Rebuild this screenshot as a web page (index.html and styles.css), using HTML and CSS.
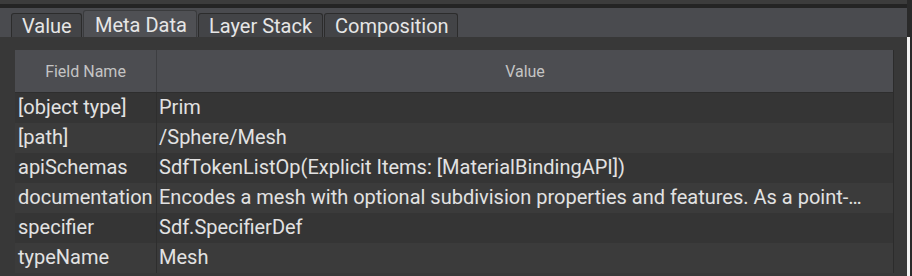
FILE: index.html
```html
<!doctype html>
<html lang="en">
<head>
  <meta charset="utf-8">
  <title>Meta Data</title>
  <link rel="stylesheet" href="styles.css">
</head>
<body>
  <div class="frame">
    <div class="panel">
      <div class="topband"></div>
      <div class="topline"></div>
      <div class="tabbar">
        <div class="tab">Value</div>
        <div class="tab tab--active">Meta Data</div>
        <div class="tab">Layer Stack</div>
        <div class="tab">Composition</div>
      </div>
      <div class="content">
        <div class="table">
          <div class="head">
            <div class="head__cell head__cell--name">Field Name</div>
            <div class="head__cell">Value</div>
          </div>
          <div class="row"><div class="cell cell--name">[object type]</div><div class="cell">Prim</div></div>
          <div class="row row--alt"><div class="cell cell--name">[path]</div><div class="cell">/Sphere/Mesh</div></div>
          <div class="row"><div class="cell cell--name">apiSchemas</div><div class="cell">SdfTokenListOp(Explicit Items: [MaterialBindingAPI])</div></div>
          <div class="row row--alt"><div class="cell cell--name">documentation</div><div class="cell">Encodes a mesh with optional subdivision properties and features. As a point-…</div></div>
          <div class="row"><div class="cell cell--name">specifier</div><div class="cell">Sdf.SpecifierDef</div></div>
          <div class="row row--alt"><div class="cell cell--name">typeName</div><div class="cell">Mesh</div></div>
        </div>
      </div>
    </div>
    <div class="edge">
      <div class="edge__bar"></div>
    </div>
  </div>
</body>
</html>
```
FILE: styles.css
```css
html, body {
  margin: 0;
  background-color: #2a2a2a;
}

body {
  width: 912px;
  height: 276px;
  overflow: hidden;
  font-family: Roboto, "Liberation Sans", sans-serif;
  color: #e2e2e2;
}

.frame {
  display: flex;
  height: 276px;
}

.panel {
  width: 907px;
  display: flex;
  flex-direction: column;
  background-color: #383838;
}

.topband {
  height: 4px;
  background-color: #3c3c3c;
}

.topline {
  height: 4px;
  background-color: #242424;
}

.tabbar {
  height: 29px;
  display: flex;
  align-items: flex-end;
  padding-left: 11px;
  background-color: #4a4b4f;
}

.tab {
  height: 24px;
  box-sizing: border-box;
  padding: 0 10px;
  font-size: 20px;
  line-height: 24px;
  color: #e6e6e6;
  background-color: #434447;
  border: 1px solid #2c2c2c;
  border-bottom: none;
  border-radius: 3px 3px 0 0;
  margin-right: 1px;
  white-space: nowrap;
}

.tab:nth-child(1) { width: 71px; }
.tab:nth-child(2) { width: 114px; padding-left: 11px; }
.tab:nth-child(3) { width: 125px; }
.tab:nth-child(4) { width: 134px; }

.tab--active {
  height: 27px;
  line-height: 28px;
  background-color: #4f5054;
  border-color: #3a3b3d;
}

.content {
  flex: 1;
  padding: 13px 13px 0 15px;
}

.table {
  border-right: 1px solid #2c2c2c;
}

.head {
  display: flex;
  height: 42px;
  background-color: #4c4d51;
  border-bottom: 1px solid #2e2e2e;
}

.head__cell {
  flex: 1;
  display: flex;
  align-items: center;
  justify-content: center;
  font-size: 16px;
  color: #c4c4c4;
}

.head__cell--name {
  flex: 0 0 141px;
  border-right: 1px solid #3d3e41;
}

.row {
  display: flex;
  height: 30px;
  background-color: #353535;
}

.row--alt {
  background-color: #3b3b3b;
}

.cell {
  flex: 1;
  padding-left: 2px;
  font-size: 20px;
  line-height: 29px;
  white-space: nowrap;
  overflow: hidden;
}

.cell--name {
  flex: 0 0 138px;
  padding-left: 3px;
  border-right: 1px solid #2e2e2e;
}

.edge {
  flex: 1;
  padding-top: 37px;
  padding-right: 2px;
}

.edge__bar {
  height: 100%;
  background-color: #f2f2f2;
}
```
